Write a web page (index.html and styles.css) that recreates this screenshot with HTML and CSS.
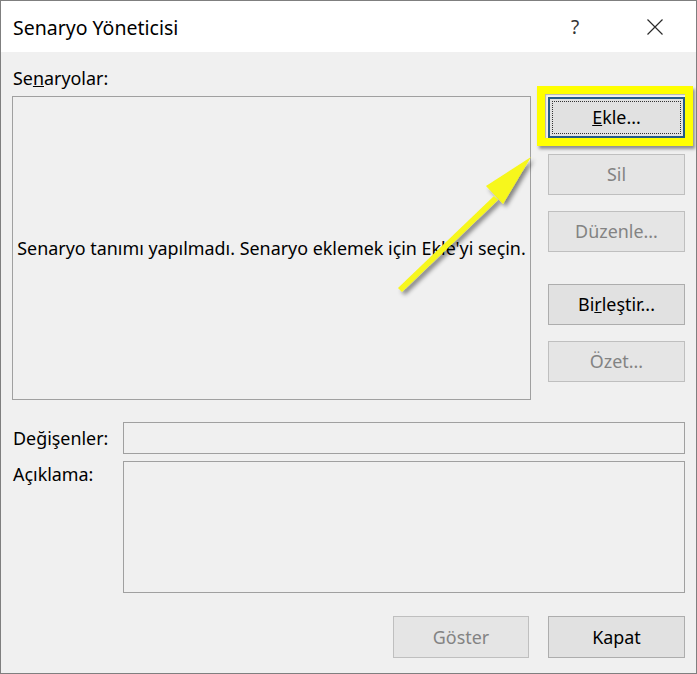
FILE: index.html
```html
<!DOCTYPE html>
<html lang="tr">
<head>
<meta charset="utf-8">
<title>Senaryo Yöneticisi</title>
<link rel="stylesheet" href="styles.css">
</head>
<body>
<div class="window">
  <div class="titlebar">
    <span class="title">Senaryo Yöneticisi</span>
    <span class="help">?</span>
    <span class="close">
      <svg width="16" height="16" viewBox="0 0 16 16"><path d="M0.5 0.5 L15.5 15.5 M15.5 0.5 L0.5 15.5" stroke="#2b2b2b" stroke-width="1.2" fill="none"/></svg>
    </span>
  </div>
  <div class="body">
    <div class="label-top">Se<u>n</u>aryolar:</div>
    <div class="main-row">
      <div class="list">Senaryo tanımı yapılmadı. Senaryo eklemek için Ekle'yi seçin.</div>
      <div class="side">
        <div class="btn-group">
          <div class="btn focused"><span class="focus-rect"><u>E</u>kle...</span><span class="highlight"></span></div>
          <div class="btn disabled">Sil</div>
          <div class="btn disabled">Düzenle...</div>
        </div>
        <div class="btn-group second">
          <div class="btn">Bi<u>r</u>leştir...</div>
          <div class="btn disabled">Özet...</div>
        </div>
      </div>
    </div>
    <div class="field-row">
      <span class="field-label">Değişenler:</span>
      <div class="input"></div>
    </div>
    <div class="field-row top">
      <span class="field-label">Açıklama:</span>
      <div class="textarea"></div>
    </div>
    <div class="footer">
      <div class="btn disabled wide">Göster</div>
      <div class="btn">Kapat</div>
    </div>
  </div>
  <svg class="arrow" width="697" height="674" viewBox="0 0 697 674">
    <defs>
      <filter id="sh" x="-20%" y="-20%" width="140%" height="140%">
        <feDropShadow dx="3" dy="3" stdDeviation="2" flood-color="#000" flood-opacity="0.45"/>
      </filter>
    </defs>
    <g filter="url(#sh)" fill="#f7f71a">
      <path d="M398 288 L494 196 L498 200 L402 292 Z"/>
      <path d="M531 157 L486 186 L503 204 Z"/>
    </g>
  </svg>
</div>
</body>
</html>
```
FILE: styles.css
```css
* { box-sizing: border-box; }
html, body { margin: 0; padding: 0; }
body {
  font-family: "Noto Sans", "Liberation Sans", sans-serif;
  font-size: 17.9px;
  color: #000;
  background: #f0f0f0;
}
.window {
  position: relative;
  width: 697px;
  height: 674px;
  border: 1px solid #7f7f7f;
  background: #f0f0f0;
  overflow: hidden;
}
.titlebar {
  height: 51px;
  background: #fff;
  display: flex;
  align-items: center;
  padding-left: 12px;
}
.title {
  font-size: 19.5px;
  flex: 1;
  padding-top: 2px;
}
.help {
  font-size: 19px;
  color: #333;
  width: 76px;
  padding-top: 1px;
}
.close {
  width: 49px;
  height: 16px;
  display: flex;
}
.body {
  padding: 0 11px;
}
.label-top {
  margin-top: 14px;
  height: 24px;
  line-height: 24px;
  padding-left: 1px;
}
.main-row {
  margin-top: 6px;
  height: 304px;
  display: flex;
}
.list {
  flex: 1;
  border: 1px solid #a0a0a0;
  display: flex;
  align-items: center;
  justify-content: center;
  padding-bottom: 1px;
  white-space: nowrap;
}
.side {
  width: 137px;
  margin-left: 17px;
  padding-top: 1px;
}
.btn-group {
  display: flex;
  flex-direction: column;
  gap: 16px;
}
.btn-group.second {
  margin-top: 32px;
}
.btn {
  position: relative;
  height: 41px;
  width: 137px;
  background: #e1e1e1;
  border: 1px solid #adadad;
  display: flex;
  align-items: center;
  justify-content: center;
  padding-bottom: 1px;
}
.btn.disabled {
  color: #838383;
  background: #e5e5e5;
  border-color: #bfbfbf;
}
.btn.focused {
  border: 2px solid #245a87;
  padding: 2px;
}
.focus-rect {
  flex: 1;
  align-self: stretch;
  border: 1px dotted #333;
  display: flex;
  align-items: center;
  justify-content: center;
  padding-bottom: 1px;
}
.highlight {
  position: absolute;
  top: -13px;
  left: -13px;
  right: -10px;
  bottom: -10px;
  border: 8px solid #ffff00;
  box-shadow: 2px 3px 3px rgba(0, 0, 0, 0.4), inset 1px 1px 1px rgba(0, 0, 0, 0.25);
  pointer-events: none;
}
.field-row {
  display: flex;
  align-items: center;
  margin-top: 22px;
  height: 32px;
}
.field-row.top {
  align-items: flex-start;
  margin-top: 7px;
  height: 132px;
}
.field-label {
  width: 111px;
  padding-left: 1px;
  padding-bottom: 1px;
}
.field-row.top .field-label {
  padding-top: 1px;
}
.input, .textarea {
  flex: 1;
  height: 100%;
  border: 1px solid #a0a0a0;
  background: #f0f0f0;
}
.footer {
  margin-top: 23px;
  display: flex;
  justify-content: flex-end;
  gap: 19px;
}
.footer .btn {
  height: 42px;
}
.footer .btn.wide {
  width: 136px;
}
.arrow {
  position: absolute;
  left: -1px;
  top: -1px;
  pointer-events: none;
}
```
